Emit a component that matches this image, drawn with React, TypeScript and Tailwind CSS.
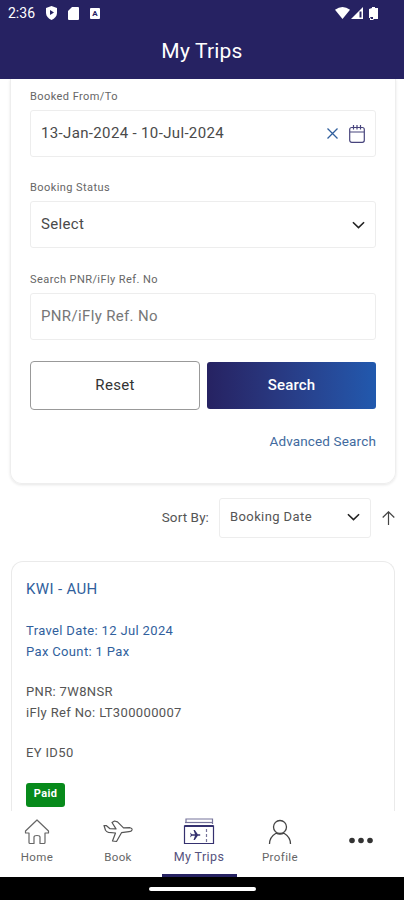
import type { ReactNode } from 'react';

interface FieldProps {
  label: string;
  children: ReactNode;
}

function Field({ label, children }: FieldProps) {
  return (
    <div className="mb-[23.4px]">
      <div className="h-4 mb-[5px] text-[11px] leading-4 tracking-[0.43px] text-[#666]">{label}</div>
      <div className="h-[47px] px-[10px] flex items-center border border-[#ededed] rounded-[3px] text-[15px] tracking-[0.35px] text-[#4a4a4a]">
        {children}
      </div>
    </div>
  );
}

function ChevronDown() {
  return (
    <svg className="w-[13px] h-2" viewBox="0 0 14 8" fill="none" stroke="#222" strokeWidth="1.7">
      <path d="M1 1l6 5.800L13 1" />
    </svg>
  );
}

function StatusBar() {
  return (
    <div className="h-[26px] pl-2 pr-[25px] flex items-center text-white">
      <span className="w-[38px] text-[14px] leading-[26px]">2:36</span>
      <svg className="w-[11px] h-[14px]" viewBox="0 0 11 14" fill="white">
        <path d="M5.500 0L11 2v5c0 3-2.200 5.600-5.500 7C2.200 12.600 0 10 0 7V2z" />
        <path d="M4 4l4 2.500-4 2.500z" fill="#262262" />
      </svg>
      <svg className="w-[11px] h-[13px] ml-[11px]" viewBox="0 0 11 13" fill="white">
        <path d="M4 0h6q1 0 1 1v11q0 1-1 1H1q-1 0-1-1V4z" />
      </svg>
      <span className="w-[10px] h-[11px] ml-[11px] bg-white rounded-[1px] text-[#262262] text-[8px] leading-[11px] text-center font-bold">A</span>
      <svg className="w-[15px] h-3 ml-auto" viewBox="0 0 15 12" fill="white">
        <path d="M0 2.800Q7.500-2.800 15 2.800L7.500 12z" />
      </svg>
      <svg className="w-3 h-3 ml-[1px]" viewBox="0 0 12 12" fill="white">
        <path d="M12 0v12H0z" />
        <path d="M8.500 4.500h2v6h-2z" fill="#262262" />
      </svg>
      <svg className="w-[9px] h-[13px] ml-[6px] mr-[1px]" viewBox="0 0 9 13" fill="white">
        <path d="M3 0h3v1h3v11H5l-1 1H1v-2H0V2l3-1z" />
        <path d="M1 10h3v2H2z" fill="#262262" />
      </svg>
    </div>
  );
}

function SearchCard() {
  return (
    <section className="ml-[10px] mr-2 h-[405px] px-[19px] pt-[10px] border border-t-0 border-[#eee] rounded-b-xl shadow-[0_1px_3px_rgba(0,0,0,0.1)] overflow-hidden">
      <Field label="Booked From/To">
        <span>13-Jan-2024 - 10-Jul-2024</span>
        <svg className="w-[11px] h-[11px] ml-auto" viewBox="0 0 11 11" stroke="#315f9d" strokeWidth="1.3">
          <path d="M.5.5l10 10M10.500.5l-10 10" />
        </svg>
        <svg className="w-4 h-[18px] ml-[11px]" viewBox="0 0 16 18" fill="none" stroke="#47447c" strokeWidth="1.2">
          <rect x=".7" y="2.500" width="14.600" height="14.800" rx="2" />
          <path d="M1 7h14M4.500 0v4.500M8 0v4.500M11.500 0v4.500" />
        </svg>
      </Field>
      <Field label="Booking Status">
        <span className="pb-[1px]">Select</span>
        <span className="ml-auto"><ChevronDown /></span>
      </Field>
      <Field label="Search PNR/iFly Ref. No">
        <span className="text-[#777]">PNR/iFly Ref. No</span>
      </Field>
      <div className="-mt-[2px] flex gap-[7px]">
        <button className="w-[170px] h-[49px] border border-[#999] rounded-[4px] text-[15px] tracking-[0.3px] text-[#333]">Reset</button>
        <button className="w-[169px] h-[47px] mt-[1px] rounded-[3px] bg-linear-to-r from-[#262262] to-[#2159ae] text-[15px] tracking-[0.15px] font-medium text-white">
          Search
        </button>
      </div>
      <div className="mt-[21px] text-right text-[13.5px] leading-5 tracking-[0.15px] text-[#416a9e]">Advanced Search</div>
    </section>
  );
}

function SortBar() {
  return (
    <div className="mt-[14px] pr-[9px] h-10 flex items-center justify-end text-[#555]">
      <span className="mr-[10px] pb-[1px] text-[13.5px] tracking-[0.1px]">Sort By:</span>
      <div className="w-[152px] h-10 px-[10px] pb-[2px] flex items-center justify-between border border-[#ededed] rounded-[3px] text-[13px] tracking-[0.4px]">
        Booking Date
        <ChevronDown />
      </div>
      <svg className="w-[13px] h-[14px] ml-[11px]" viewBox="0 0 13 14" fill="none" stroke="#444" strokeWidth="1.2">
        <path d="M6.500 14V1M.7 6.500l5.800-5.700 5.800 5.700" />
      </svg>
    </div>
  );
}

function TripCard() {
  return (
    <section className="ml-[11px] mr-[9px] mt-[23px] h-[252px] px-[14px] pt-[17px] border border-b-0 border-[#eaeaea] rounded-t-xl text-[13px] leading-[20.500px] tracking-[0.35px] text-[#555] overflow-hidden">
      <h2 className="text-[15px] leading-5 text-[#315f9d]">KWI - AUH</h2>
      <div className="mt-[22px] text-[#315f9d]">
        <p>Travel Date: 12 Jul 2024</p>
        <p>Pax Count: 1 Pax</p>
      </div>
      <div className="mt-5">
        <p>PNR: 7W8NSR</p>
        <p>iFly Ref No: LT300000007</p>
      </div>
      <p className="mt-5">EY ID50</p>
      <span className="mt-[19px] w-[39px] h-6 flex items-center justify-center rounded-[3px] bg-[#078a1b] text-[11px] font-bold text-white">Paid</span>
    </section>
  );
}

interface NavItemProps {
  label?: string;
  active?: boolean;
  children: ReactNode;
}

function NavItem({ label, active, children }: NavItemProps) {
  return (
    <div className="w-20 flex justify-center">
      <div
        className={`w-[75px] h-[66px] pt-[5px] flex flex-col items-center border-b-[3px] ${
          active ? 'border-[#262262] text-[12.5px] text-[#55527d]' : 'border-transparent text-[11.5px] text-[#666]'
        }`}
      >
        <div className="h-[31px] flex items-center justify-center">{children}</div>
        {label && <span className="leading-5 tracking-[0.4px] whitespace-nowrap">{label}</span>}
      </div>
    </div>
  );
}

function BottomNav() {
  return (
    <nav className="-ml-[3px] h-[66px] flex gap-[1px] bg-white">
      <NavItem label="Home">
        <svg className="w-[26px] h-[26px]" viewBox="0 0 26 26" fill="none" stroke="#666" strokeWidth="1.2" strokeLinejoin="round">
          <path d="M13 1L1.500 12v2H5v9.500q0 1 1 1h4V18q0-1.500 3-1.500t3 1.500v6.500h4q1 0 1-1V14h3.500v-2z" />
        </svg>
      </NavItem>
      <NavItem label="Book">
        <svg className="w-[30px] h-[23px]" viewBox="0 0 30 23" fill="none" stroke="#555" strokeWidth="1.2" strokeLinejoin="round">
          <path d="M1 5.500l2.500.2 3.500 3 6 .2L9 2.500 11.500 1l3 .8 6 6 6.500-.1q2.500.8 2 2.300-.6 1.500-3 1.700l-7.500 1L13.500 21.500l-4-.5L12.500 13l-7-.7q-2-.3-3-2z" />
        </svg>
      </NavItem>
      <NavItem label="My Trips" active>
        <svg className="w-[32px] h-[27px]" viewBox="0 0 32 27" fill="none" stroke="#35316f" strokeWidth="1.2">
          <path d="M3 4.500V1h26.500v5" stroke="#77759b" />
          <path d="M2 4.500h28" stroke="#77759b" />
          <path d="M1.500 8h29v17.500h-29z" />
          <path d="M1.500 8h29" strokeWidth="2" />
          <path d="M23.500 11v13" stroke="#77759b" strokeDasharray="3 2" />
          <path d="M7 14.500l2 1.800h3L10.500 12h1.300l3 4.300h2q1.500.7 0 1.400h-2l-3 4.300h-1.300l1.500-4.300H9L7 19.500l.8-2.500z" fill="#35316f" stroke="none" />
        </svg>
      </NavItem>
      <NavItem label="Profile">
        <svg className="w-6 h-[26px]" viewBox="0 0 24 26" fill="none" stroke="#444" strokeWidth="1.3">
          <circle cx="12" cy="8" r="6.500" />
          <path d="M1.500 25q0-7 6.500-10.800 4 2 8 0Q22.500 18 22.500 25" />
        </svg>
      </NavItem>
      <NavItem>
        <svg className="w-6 h-[7px] mt-[17px]" viewBox="0 0 24 7" fill="#333">
          <circle cx="3" cy="3.500" r="2.800" />
          <circle cx="12" cy="3.500" r="2.800" />
          <circle cx="21" cy="3.500" r="2.800" />
        </svg>
      </NavItem>
    </nav>
  );
}

export default function App() {
  return (
    <div className="w-[404px] h-[900px] flex flex-col overflow-hidden bg-white font-[Roboto,sans-serif]">
      <header className="h-[79px] shrink-0 bg-[#262262]">
        <StatusBar />
        <h1 className="text-center text-[21px] leading-[50px] tracking-[0.2px] text-white">My Trips</h1>
      </header>
      <main className="h-[732px] shrink-0 overflow-hidden">
        <SearchCard />
        <SortBar />
        <TripCard />
      </main>
      <BottomNav />
      <div className="flex-1 flex items-center justify-center bg-black">
        <div className="w-[107px] h-1 rounded-full bg-white" />
      </div>
    </div>
  );
}
